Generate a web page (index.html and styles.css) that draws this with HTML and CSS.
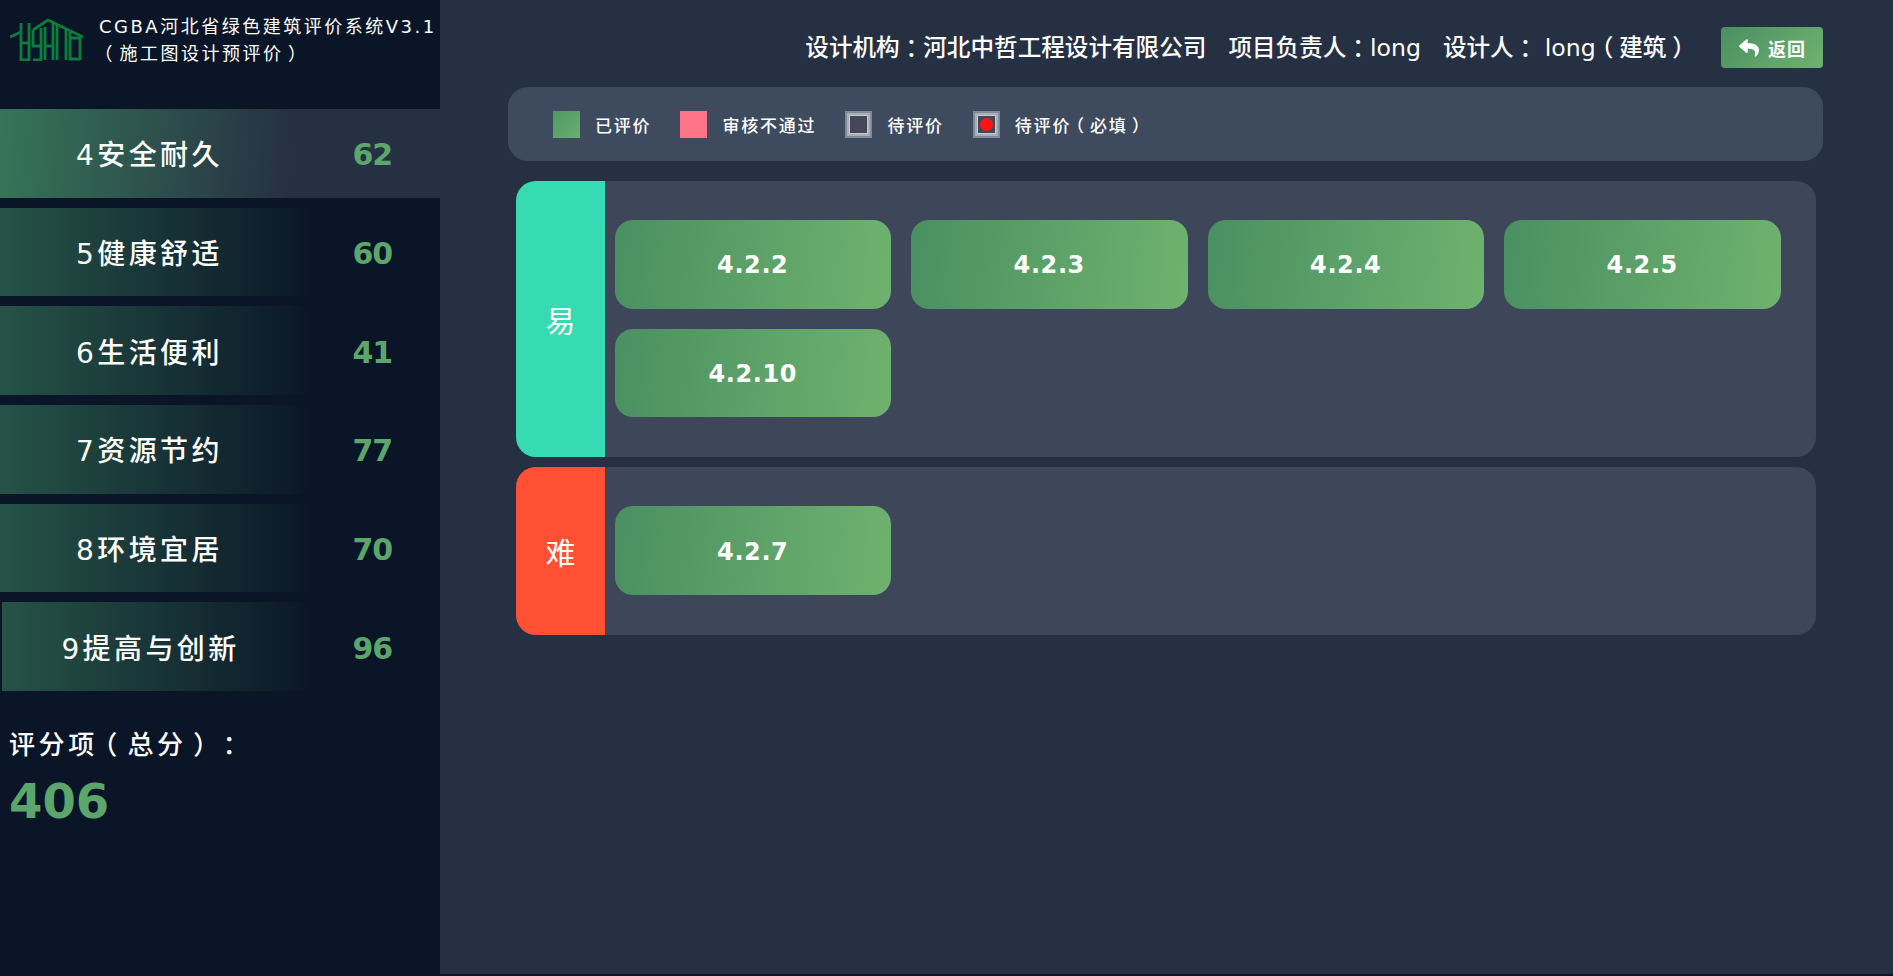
FILE: index.html
```html
<!DOCTYPE html>
<html>
<head>
  <meta charset="utf-8">
  <title>CGBA河北省绿色建筑评价系统</title>
  <link rel="stylesheet" href="styles.css">
</head>
<body>

<!-- Sidebar -->
<div class="sidebar">
  <div class="brand">
    <svg class="logo" viewBox="0 0 74 42" fill="none" stroke="#0b7d3c" stroke-width="2.8">
      <path d="M0 18L11 13"/>
      <path d="M11 4V41H19V4"/>
      <path d="M11 24H19"/>
      <path d="M23 41H31V9"/>
      <path d="M23 11V27H31"/>
      <path d="M23 11L38 1L73 18"/>
      <path d="M35 41V8M43 41V4"/>
      <path d="M35 27H43"/>
      <path d="M47 41V6M56 41V10"/>
      <path d="M60 12V40H70"/>
      <path d="M60 19H70V41"/>
    </svg>
    <div class="brand-text">
      <div>CGBA河北省绿色建筑评价系统V3.1</div>
      <div><span class="pn">（</span>施工图设计预评价<span class="pn">）</span></div>
    </div>
  </div>

  <div class="menu">
    <div class="menu-row active"><span class="menu-name">4安全耐久</span><span class="menu-score">62</span></div>
    <div class="menu-row"><span class="menu-name">5健康舒适</span><span class="menu-score">60</span></div>
    <div class="menu-row"><span class="menu-name">6生活便利</span><span class="menu-score">41</span></div>
    <div class="menu-row"><span class="menu-name">7资源节约</span><span class="menu-score">77</span></div>
    <div class="menu-row"><span class="menu-name">8环境宜居</span><span class="menu-score">70</span></div>
    <div class="menu-row last"><span class="menu-name">9提高与创新</span><span class="menu-score">96</span></div>
  </div>

  <div class="total-label">评分项<span class="pn">（</span>总分<span class="pn">）</span><span class="pn">：</span></div>
  <div class="total-value">406</div>
</div>

<!-- Main -->
<div class="main">
  <div class="top">
    <span class="top-item">设计机构<span class="pn">：</span>河北中哲工程设计有限公司</span>
    <span class="top-item">项目负责人<span class="pn">：</span>long</span>
    <span class="top-item">设计人<span class="pn">：</span> long<span class="pn">（</span>建筑<span class="pn">）</span></span>
    <a class="back" href="#">
      <svg class="back-icon" viewBox="0 0 512 512"><path fill="#fff" d="M8.309 189.836L184.313 37.851C199.719 24.546 224 35.347 224 56.015v80.053c160.629 1.839 288 34.032 288 186.258 0 61.441-39.581 122.309-83.333 154.132-13.653 9.931-33.111-2.533-28.077-18.631 45.344-145.012-21.507-183.51-176.59-185.742V360c0 20.7-24.3 31.453-39.687 18.164l-176.004-152c-11.071-9.562-11.086-26.753 0-36.328z"/></svg>
      返回
    </a>
  </div>

  <div class="legend">
    <div class="legend-item"><span class="swatch done"></span>已评价</div>
    <div class="legend-item"><span class="swatch rejected"></span>审核不通过</div>
    <div class="legend-item"><span class="swatch pending"></span>待评价</div>
    <div class="legend-item"><span class="swatch pending"><i class="dot"></i></span>待评价<span class="pn">（</span>必填<span class="pn">）</span></div>
  </div>

  <div class="group">
    <div class="group-tag easy">易</div>
    <div class="group-items">
      <div class="item">4.2.2</div>
      <div class="item">4.2.3</div>
      <div class="item">4.2.4</div>
      <div class="item">4.2.5</div>
      <div class="item">4.2.10</div>
    </div>
  </div>

  <div class="group">
    <div class="group-tag hard">难</div>
    <div class="group-items">
      <div class="item">4.2.7</div>
    </div>
  </div>
</div>

</body>
</html>
```

FILE: styles.css
```css
html {
  height: 976px;
  overflow: hidden;
}

body {
  margin: 0;
  display: flex;
  box-sizing: border-box;
  height: 976px;
  overflow: hidden;
  border-bottom: 2px solid #11151f;
  background: #263043;
  color: #fff;
  font-family: "DejaVu Sans", "Noto Sans CJK SC", sans-serif;
  text-spacing-trim: space-all;
}

/* fullwidth punctuation, half width glyph centred in its box */
.pn {
  margin: 0 .25em;
  font-feature-settings: "halt";
}

/* sidebar */
.sidebar {
  width: 440px;
  flex-shrink: 0;
  background: #0a1527;
}

.brand {
  display: flex;
  height: 96px;
  padding: 13px 0 0 10px;
}

.logo {
  width: 74px;
  height: 42px;
  margin-top: 6px;
  margin-right: 15px;
  flex-shrink: 0;
}

.brand-text {
  font-size: 18px;
  line-height: 27px;
  letter-spacing: 2.5px;
  white-space: nowrap;
}

.menu-row {
  display: flex;
  align-items: center;
  height: 88.7px;
  margin-bottom: 10px;
  background: linear-gradient(90deg, #265347, #0a1527 72%);
}

.menu-row.active {
  background: linear-gradient(95deg, #367558, #263043 66%);
}

.menu-row.last {
  margin-left: 2px;
  margin-bottom: 0;
}

.menu-name {
  width: 299px;
  text-align: center;
  font-size: 28px;
  font-weight: 500;
  letter-spacing: 3.4px;
}

.menu-row.last .menu-name {
  width: 297px;
}

.menu-score {
  margin-left: 53.5px;
  padding-top: 3px;
  font-size: 30px;
  font-weight: bold;
  letter-spacing: -1px;
  color: #5ca66c;
}

.total-label {
  margin-top: 36px;
  padding-left: 9px;
  font-size: 26px;
  font-weight: 500;
  line-height: 36px;
  letter-spacing: 3.6px;
}

.total-value {
  margin-top: 8px;
  padding-left: 9px;
  font-size: 48px;
  line-height: 60px;
  font-weight: bold;
  color: #5ca66c;
}

/* main */
.main {
  flex: 1;
  padding: 27px 70px 0 68px;
}

.top {
  display: flex;
  justify-content: flex-end;
  align-items: center;
  height: 41px;
  margin-bottom: 19px;
  font-size: 23.6px;
  font-weight: 500;
  white-space: nowrap;
}

.top-item {
  margin-left: 22px;
  margin-bottom: 3px;
}

.back {
  display: flex;
  align-items: center;
  justify-content: center;
  width: 102px;
  height: 41px;
  margin-left: 31px;
  padding-left: 1px;
  box-sizing: border-box;
  border-radius: 4px;
  background: linear-gradient(135deg, #4a9061, #6fb26f);
  color: #fff;
  font-size: 18px;
  font-weight: bold;
  letter-spacing: 1px;
  text-decoration: none;
}

.back-icon {
  width: 20px;
  height: 20px;
  margin-right: 9px;
}

.legend {
  display: flex;
  align-items: center;
  gap: 29px;
  height: 74px;
  padding-left: 45px;
  margin-bottom: 20px;
  border-radius: 20px;
  background: #3e4a5e;
}

.legend-item {
  display: flex;
  align-items: center;
  font-size: 17px;
  font-weight: 500;
  letter-spacing: 1.8px;
}

.swatch {
  display: flex;
  align-items: center;
  justify-content: center;
  width: 27px;
  height: 27px;
  margin-right: 15px;
}

.swatch.done {
  background: linear-gradient(135deg, #4f9864, #6cae6f);
}

.swatch.rejected {
  background: #ff7388;
}

.swatch.pending {
  background: #454759;
  box-shadow: inset 0 0 0 2px #7f8b97, inset 0 0 0 4px #a7afb8, inset 0 0 0 5px #c4cad0;
}

.dot {
  width: 13px;
  height: 13px;
  border-radius: 50%;
  background: #ff1414;
}

.group {
  display: flex;
  margin: 0 7px 10px 8px;
  border-radius: 20px;
  overflow: hidden;
  background: #3e4659;
}

.group-tag {
  display: flex;
  align-items: center;
  justify-content: center;
  width: 89px;
  flex-shrink: 0;
  font-size: 30px;
}

.group-tag.easy {
  background: #36dbb2;
}

.group-tag.hard {
  background: #ff5033;
}

.group-items {
  display: flex;
  flex-wrap: wrap;
  gap: 20px;
  flex: 1;
  padding: 39px 10px 40px 9.5px;
}

.item {
  display: flex;
  align-items: center;
  justify-content: center;
  box-sizing: border-box;
  width: 276.5px;
  height: 88.7px;
  padding-top: 2px;
  border-radius: 18px;
  background: linear-gradient(95deg, #4a9061, #6fb26f);
  font-size: 24px;
  font-weight: bold;
  letter-spacing: .6px;
}
```
